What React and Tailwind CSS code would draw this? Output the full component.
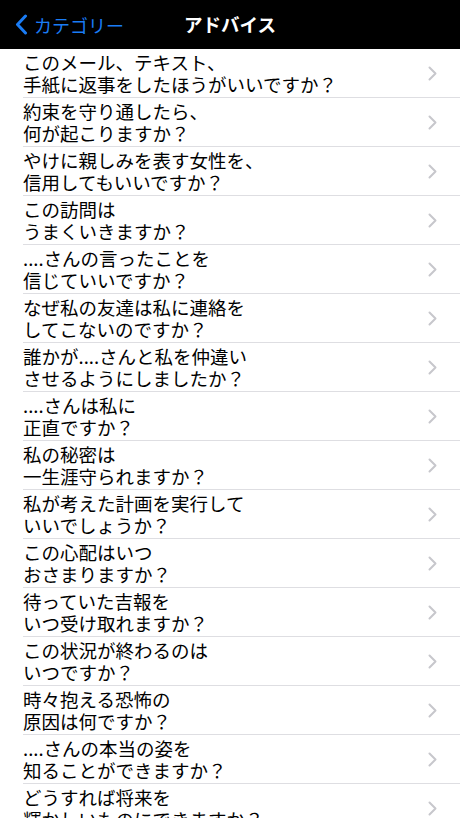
import React from 'react';

const questions = [
  ['このメール、テキスト、', '手紙に返事をしたほうがいいですか？'],
  ['約束を守り通したら、', '何が起こりますか？'],
  ['やけに親しみを表す女性を、', '信用してもいいですか？'],
  ['この訪問は', 'うまくいきますか？'],
  ['....さんの言ったことを', '信じていいですか？'],
  ['なぜ私の友達は私に連絡を', 'してこないのですか？'],
  ['誰かが....さんと私を仲違い', 'させるようにしましたか？'],
  ['....さんは私に', '正直ですか？'],
  ['私の秘密は', '一生涯守られますか？'],
  ['私が考えた計画を実行して', 'いいでしょうか？'],
  ['この心配はいつ', 'おさまりますか？'],
  ['待っていた吉報を', 'いつ受け取れますか？'],
  ['この状況が終わるのは', 'いつですか？'],
  ['時々抱える恐怖の', '原因は何ですか？'],
  ['....さんの本当の姿を', '知ることができますか？'],
  ['どうすれば将来を', '輝かしいものにできますか？'],
];

const font = { fontFamily: '"Noto Sans CJK JP", "Noto Sans", sans-serif' };

function Chevron() {
  return (
    <svg width="9" height="15" viewBox="0 0 9 15" fill="none">
      <path d="M1.5 1.5L7.5 7.5L1.5 13.5" stroke="#c7c7cc" strokeWidth="2" strokeLinecap="round" strokeLinejoin="round" />
    </svg>
  );
}

export default function App() {
  return (
    <div className="w-[460px] h-[818px] overflow-hidden bg-white font-['Noto_Sans_CJK_JP',sans-serif]">
      {/* Nav bar */}
      <header className="relative h-[49px] bg-black flex items-center">
        <div className="flex items-center pl-[15px] gap-[6px] text-[#1a7cf5]">
          <svg width="13" height="21" viewBox="0 0 13 21" fill="none">
            <path d="M10.5 2L2.5 10.5L10.5 19" stroke="#1a7cf5" strokeWidth="3" strokeLinecap="round" strokeLinejoin="round" />
          </svg>
          <span className="text-[18px] leading-none">カテゴリー</span>
        </div>
        <h1 className="absolute left-1/2 -translate-x-1/2 text-white text-[18.5px] font-bold leading-none">
          アドバイス
        </h1>
      </header>

      {/* Question list */}
      <ul>
        {questions.map(([a, b]) => (
          <li key={a} className="pl-[23px]">
            <div className="h-[49px] border-b border-[#dedee2] flex items-center pr-[23px]">
              <p className="flex-1 text-[18.5px] leading-[22px] text-black whitespace-nowrap">
                {a}
                <br />
                {b}
              </p>
              <Chevron />
            </div>
          </li>
        ))}
      </ul>
    </div>
  );
}
